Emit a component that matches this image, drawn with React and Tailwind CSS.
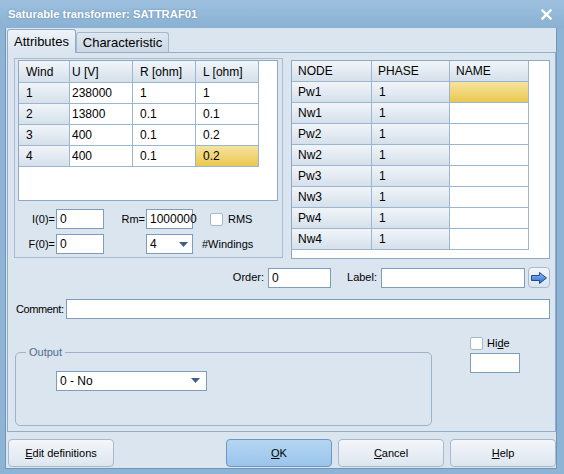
const grid = "border-r border-b border-[#9ab6d1]";
const head = "bg-linear-to-b from-[#f1f5f9] to-[#d5e0eb]";
const gold = "bg-linear-to-b from-[#f6e39c] to-[#ebc84c]";
const field = "h-[20px] border border-[#7f9db9] bg-white text-[12px] leading-none flex items-center pl-[3px]";

const leftHead = ["Wind", "U [V]", "R [ohm]", "L [ohm]"];
const leftRows = [
  ["1", "238000", "1", "1"],
  ["2", "13800", "0.1", "0.1"],
  ["3", "400", "0.1", "0.2"],
  ["4", "400", "0.1", "0.2"],
];
const nodes = ["Pw1", "Nw1", "Pw2", "Nw2", "Pw3", "Nw3", "Pw4", "Nw4"];

const Arrow = () => (
  <svg width="9" height="5" viewBox="0 0 9 5" aria-hidden>
    <polygon points="0,0 9,0 4.5,5" fill="#3f5f86" />
  </svg>
);

const Check = () => (
  <span className="block size-[13px] rounded-[2px] border border-[#a4b8cc] bg-white" />
);

const Btn = ({ children, primary, className = "" }) => (
  <button
    type="button"
    className={`h-[28px] w-[106px] rounded-[4px] border text-[11px] ${
      primary
        ? "border-[#6e96c1] bg-linear-to-b from-[#b5d6f3] to-[#9ac4eb]"
        : "border-[#a6b9cd] bg-linear-to-b from-[#f3f6fa] to-[#dde6ef]"
    } ${className}`}
  >
    {children}
  </button>
);

export default function App() {
  return (
    <div className="flex h-[474px] w-[564px] flex-col bg-[#8db3d5] font-['Liberation_Sans',Arial,sans-serif] text-black">
      {/* title bar */}
      <div className="flex h-[28px] items-center justify-between bg-linear-to-b from-[#9dc0de] to-[#8ab1d3] pl-[8px] pr-[12px]">
        <span className="text-[11.3px] font-bold text-white [text-shadow:0_0_2px_rgba(40,70,110,0.45)]">
          Saturable transformer: SATTRAF01
        </span>
        <svg width="11" height="11" viewBox="0 0 11 11" aria-hidden>
          <path d="M1.5 1.5l8 8M9.5 1.5l-8 8" stroke="#fff" strokeWidth="2.4" strokeLinecap="square" />
        </svg>
      </div>

      {/* client */}
      <div className="mb-[5px] ml-[5px] mr-[7px] flex flex-1 flex-col border-x border-b border-[#7296ba] bg-[#dbe5ef]">
        {/* tabs */}
        <div className="flex h-[24px] items-end pl-[1px] text-[13px]">
          <div className="relative z-10 -mb-px flex h-[24px] w-[69px] items-center justify-center rounded-t-[3px] border-x border-t border-[#93adc7] bg-linear-to-b from-[#eef3f8] to-[#dbe5ef]">
            Attributes
          </div>
          <div className="flex h-[20px] w-[93px] items-center justify-center rounded-t-[3px] border-x border-t border-[#a3b8cd] bg-linear-to-b from-[#dde7f0] to-[#cbd8e5]">
            Characteristic
          </div>
        </div>

        {/* tab page */}
        <div className="ml-px flex h-[380px] w-[549px] flex-col border border-[#93adc7] bg-[#dbe5ef] text-[11px]">
          <div className="mt-[5px] flex items-start">
            {/* left frame */}
            <div className="ml-[6px] h-[200px] w-[269px] border border-[#a7bcd1]">
              <div className="ml-[3px] mt-px h-[141px] w-[260px] border border-[#8fa9c2] bg-white">
                <div className="grid grid-cols-[51px_63px_63px_63px] text-[12px]">
                  {leftHead.map((h, i) => (
                    <div key={h} className={`${grid} ${head} flex h-[22px] items-center ${i === 1 ? "pl-[2px]" : "pl-[7px]"}`}>
                      {h}
                    </div>
                  ))}
                  {leftRows.map((row, r) =>
                    row.map((v, c) => (
                      <div
                        key={`${r}-${c}`}
                        className={`${grid} flex h-[21px] items-center ${c === 1 ? "pl-[2px]" : "pl-[7px]"} ${
                          c === 0 ? head : r === 3 && c === 3 ? gold : "bg-white"
                        }`}
                      >
                        {v}
                      </div>
                    ))
                  )}
                </div>
              </div>

              <div className="mt-[8px] flex items-center">
                <span className="w-[41px] pr-px text-right">I(0)=</span>
                <div className={`${field} w-[48px]`}>0</div>
                <span className="w-[42px] pr-px text-right">Rm=</span>
                <div className={`${field} w-[47px]`}>1000000</div>
                <span className="ml-[17px]">
                  <Check />
                </span>
                <span className="ml-[5px]">RMS</span>
              </div>
              <div className="mt-[5px] flex items-center">
                <span className="w-[41px] pr-px text-right">F(0)=</span>
                <div className={`${field} w-[48px]`}>0</div>
                <span className="w-[42px]" />
                <div className={`${field} w-[47px] justify-between pr-[4px]`}>
                  4
                  <Arrow />
                </div>
                <span className="ml-[9px]">#Windings</span>
              </div>
            </div>

            {/* right grid */}
            <div className="ml-[8px] mt-[2px] h-[199px] w-[259px] border border-[#8fa9c2] bg-white">
              <div className="grid grid-cols-[80px_78px_79px] text-[12px]">
                {["NODE", "PHASE", "NAME"].map((h) => (
                  <div key={h} className={`${grid} ${head} flex h-[21px] items-center pl-[6px]`}>
                    {h}
                  </div>
                ))}
                {nodes.map((n, r) => [
                  <div key={`${n}a`} className={`${grid} ${head} flex h-[21px] items-center pl-[6px]`}>
                    {n}
                  </div>,
                  <div key={`${n}b`} className={`${grid} ${head} flex h-[21px] items-center pl-[7px]`}>
                    1
                  </div>,
                  <div key={`${n}c`} className={`${grid} h-[21px] ${r === 0 ? gold : "bg-white"}`} />,
                ])}
              </div>
            </div>
          </div>

          {/* order / label */}
          <div className="mt-[8px] flex items-center justify-end pr-[5px]">
            <span className="mr-[4px]">Order:</span>
            <div className={`${field} w-[63px]`}>0</div>
            <span className="ml-[16px] mr-[4px]">Label:</span>
            <div className={`${field} w-[144px]`} />
            <button
              type="button"
              className="ml-[3px] flex h-[21px] w-[22px] items-center justify-center rounded-[4px] border border-[#a6b9cd] bg-linear-to-b from-[#f3f6fa] to-[#dbe4ee]"
            >
              <svg width="16" height="12" viewBox="0 0 16 12" aria-hidden>
                <defs>
                  <linearGradient id="ag" x1="0" y1="0" x2="0" y2="1">
                    <stop offset="0" stopColor="#8cc0f7" />
                    <stop offset="1" stopColor="#2d67c6" />
                  </linearGradient>
                </defs>
                <path d="M0.5 3.5h8v-3l7 5.5-7 5.5v-3h-8z" fill="url(#ag)" stroke="#1d4a94" />
              </svg>
            </button>
          </div>

          {/* comment */}
          <div className="mt-[11px] flex items-center pl-[8px] pr-[5px]">
            <span className="w-[50px] whitespace-nowrap tracking-[-0.4px]">Comment:</span>
            <div className={`${field} flex-1`} />
          </div>

          {/* output + hide */}
          <div className="mt-[17px] flex items-start">
            <fieldset className="ml-[7px] mt-[8px] h-[82px] w-[417px] rounded-[5px] border border-[#9fb3c8]">
              <legend className="ml-[10px] px-[3px] text-[#4e6d8c]">Output</legend>
              <div className={`${field} ml-[40px] mt-[10px] h-[19px] w-[151px] justify-between pr-[6px]`}>
                0 - No
                <Arrow />
              </div>
            </fieldset>
            <div className="ml-[38px] flex flex-col">
              <div className="flex h-[15px] items-center">
                <Check />
                <span className="ml-[4px]">
                  Hi<span className="underline">d</span>e
                </span>
              </div>
              <div className={`${field} mt-[2px] h-[19px] w-[50px]`} />
            </div>
          </div>
        </div>

        {/* buttons */}
        <div className="mt-[7px] flex items-start justify-between pl-[2px]">
          <Btn className="w-[105px]">
            <span className="underline">E</span>dit definitions
          </Btn>
          <div className="flex gap-[6px]">
            <Btn primary>
              <span className="underline">O</span>K
            </Btn>
            <Btn>
              <span className="underline">C</span>ancel
            </Btn>
            <Btn>
              <span className="underline">H</span>elp
            </Btn>
          </div>
        </div>
      </div>
    </div>
  );
}
